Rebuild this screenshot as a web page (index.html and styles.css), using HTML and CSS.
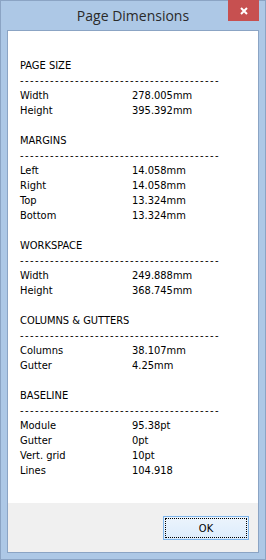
FILE: index.html
```html
<!DOCTYPE html>
<html lang="en">
<head>
    <meta charset="UTF-8">
    <title>Page Dimensions</title>
    <link rel="stylesheet" href="styles.css">
</head>
<body>
    <div class="window">
        <div class="titlebar">Page Dimensions</div>
        <button class="close" aria-label="Close">
            <svg width="8" height="8" viewBox="0 0 8 8"><path d="M1 1L7 7M7 1L1 7" stroke="#fff" stroke-width="2" fill="none"/></svg>
        </button>
        <div class="client">
            <div class="content">
                <div class="section">
                    <div class="heading">PAGE SIZE</div>
                    <div class="dashes">----------------------------------------</div>
                    <div class="row"><span>Width</span><span>278.005mm</span></div>
                    <div class="row"><span>Height</span><span>395.392mm</span></div>
                </div>
                <div class="section">
                    <div class="heading">MARGINS</div>
                    <div class="dashes">----------------------------------------</div>
                    <div class="row"><span>Left</span><span>14.058mm</span></div>
                    <div class="row"><span>Right</span><span>14.058mm</span></div>
                    <div class="row"><span>Top</span><span>13.324mm</span></div>
                    <div class="row"><span>Bottom</span><span>13.324mm</span></div>
                </div>
                <div class="section">
                    <div class="heading">WORKSPACE</div>
                    <div class="dashes">----------------------------------------</div>
                    <div class="row"><span>Width</span><span>249.888mm</span></div>
                    <div class="row"><span>Height</span><span>368.745mm</span></div>
                </div>
                <div class="section">
                    <div class="heading">COLUMNS &amp; GUTTERS</div>
                    <div class="dashes">----------------------------------------</div>
                    <div class="row"><span>Columns</span><span>38.107mm</span></div>
                    <div class="row"><span>Gutter</span><span>4.25mm</span></div>
                </div>
                <div class="section">
                    <div class="heading">BASELINE</div>
                    <div class="dashes">----------------------------------------</div>
                    <div class="row"><span>Module</span><span>95.38pt</span></div>
                    <div class="row"><span>Gutter</span><span>0pt</span></div>
                    <div class="row"><span>Vert. grid</span><span>10pt</span></div>
                    <div class="row"><span>Lines</span><span>104.918</span></div>
                </div>
            </div>
            <div class="footer">
                <button class="ok">OK</button>
            </div>
        </div>
    </div>
</body>
</html>
```

FILE: styles.css
```css
body {
    margin: 0;
    background-color: #adc8e6;
}
.window {
    position: relative;
    box-sizing: border-box;
    width: 266px;
    height: 560px;
    border: 1px solid #8ba4c4;
    background-color: #adc8e6;
    padding: 0 6px 6px;
    display: flex;
    flex-direction: column;
}
.titlebar {
    height: 29px;
    line-height: 30px;
    text-align: center;
    font-family: "Open Sans", "Noto Sans", sans-serif;
    font-size: 14px;
    color: #2a2a2a;
    margin: 0 -6px;
}
.close {
    position: absolute;
    top: -1px;
    right: 6px;
    width: 31px;
    height: 21px;
    border: 0;
    padding: 0;
    background-color: #c75050;
    display: flex;
    align-items: center;
    justify-content: center;
}
.close svg {
    display: block;
}
.client {
    flex: 1;
    border: 1px solid #8ba4c4;
    background-color: #fff;
    display: flex;
    flex-direction: column;
}
.content {
    flex: 1;
    padding: 27px 12px 0;
    font-family: "DejaVu Sans Condensed", "DejaVu Sans", sans-serif;
    font-stretch: condensed;
    font-size: 11px;
    line-height: 15px;
    color: #000;
}
.section {
    margin-bottom: 15px;
}
.dashes {
    letter-spacing: 1.43px;
    white-space: nowrap;
}
.row {
    display: grid;
    grid-template-columns: 112px 1fr;
}
.footer {
    height: 49px;
    box-sizing: border-box;
    background-color: #f0f0f0;
    padding: 13px 9px 12px;
    display: flex;
    justify-content: flex-end;
    align-items: flex-start;
}
.ok {
    width: 86px;
    height: 24px;
    border: 1px solid #7eb4ea;
    background: linear-gradient(#ecf4fc, #dcecfc);
    font-family: "DejaVu Sans Condensed", "DejaVu Sans", sans-serif;
    font-stretch: condensed;
    font-size: 11px;
    color: #000;
    outline: 1px dotted #000;
    outline-offset: -3px;
    padding: 0;
}
```
